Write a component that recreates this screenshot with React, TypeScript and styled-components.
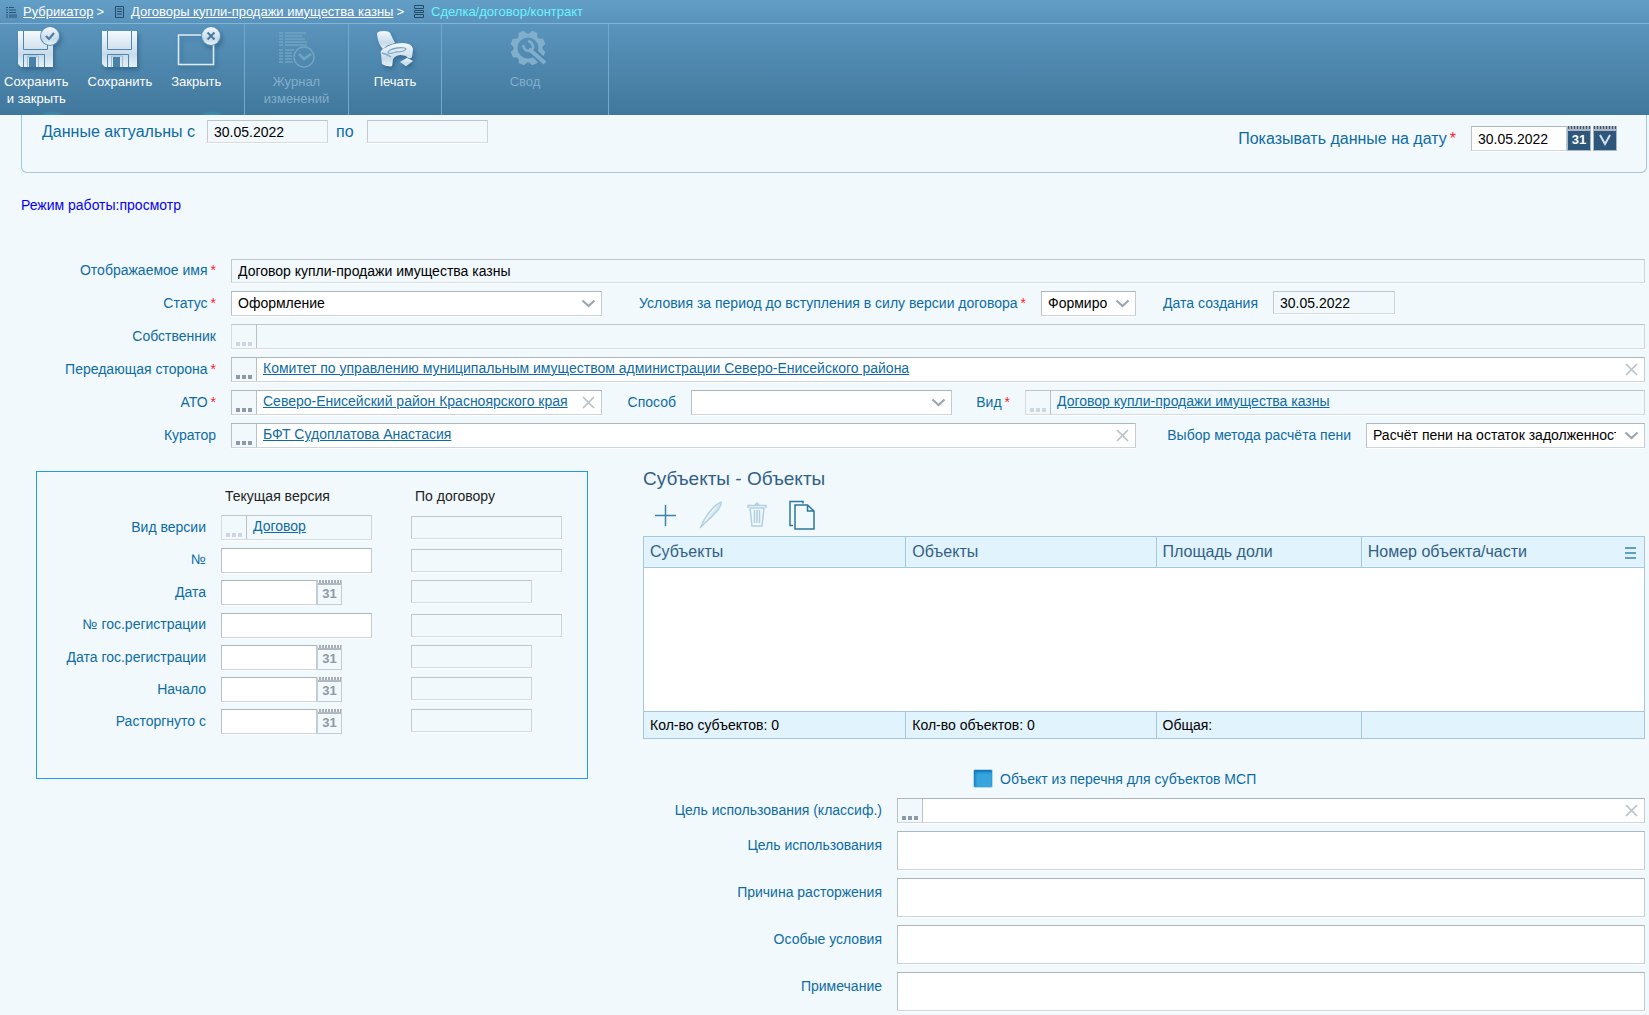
import React from 'react';
import styled, { createGlobalStyle, css } from 'styled-components';

const color = {
  page: '#f1f9fd',
  label: '#0e6ba3',
  heading: '#335f86',
  grid: '#a3c8de',
  gridHead: '#e1f3fc',
  icon: '#8f9aa9',
};

const GlobalStyle = createGlobalStyle`
  *, *::before, *::after { box-sizing: border-box; }
  body {
    margin: 0;
    background: ${color.page};
    color: #000;
    font: 14px/16px "Liberation Sans", Arial, sans-serif;
  }
  button, input, select, textarea { font: inherit; color: inherit; margin: 0; border-radius: 0; }
  button { padding: 0; border: 0; background: none; cursor: pointer; }
  button:disabled { cursor: default; }
  svg { display: block; flex: none; }
`;

/* ---------- header ---------- */

const Header = styled.header`
  background:
    radial-gradient(14px 4px at 52px 100%, #3794b8, transparent),
    radial-gradient(14px 4px at 212px 100%, #3794b8, transparent),
    linear-gradient(#629ec6 0, #5a94bc 22px, #5a94bc 24px, #40779c 100%);
  color: #fff;
  font-size: 13px;
`;

const Breadcrumbs = styled.nav`
  display: flex;
  align-items: center;
  height: 24px;
  padding: 0 6px;
  gap: 10px;
  border-bottom: 1px solid #7db6d6;
  a { color: #fff; }
`;

const Crumb = styled.span<{ $current?: boolean }>`
  display: flex;
  align-items: center;
  gap: 6px;
  color: ${(p) => (p.$current ? '#6cf3ff' : '#fff')};
`;

const Arrow = styled.span`
  margin-left: -7px;
`;

const Toolbar = styled.div`
  display: flex;
  height: 91px;
`;

const ToolGroup = styled.div<{ $width: number }>`
  display: flex;
  align-items: flex-start;
  justify-content: center;
  gap: 19px;
  width: ${(p) => p.$width}px;
  border-right: 1px solid #6fabcc;
  &:first-child { justify-content: flex-start; padding-left: 4px; }
`;

const ToolButton = styled.button`
  display: flex;
  flex-direction: column;
  align-items: center;
  gap: 1px;
  line-height: 17px;
  text-align: center;
  white-space: pre-line;
  &:disabled { color: #83afca; }
`;

/* ---------- form controls ---------- */

const edge = css`
  border: 1px solid;
  border-color: #abb6bd #c3ccd2 #ccd5db #b7c1c7;
  box-shadow: 0 1px 0 #fff;
`;

const Label = styled.label<{ $width?: number; $large?: boolean }>`
  flex: none;
  width: ${(p) => (p.$width ? `${p.$width}px` : 'auto')};
  padding: 0 15px 2px 0;
  color: ${color.label};
  font-size: ${(p) => (p.$large ? 16 : 14)}px;
  line-height: ${(p) => (p.$large ? 20 : 16)}px;
  text-align: right;
  white-space: nowrap;
`;

const Star = styled.span`
  padding-left: 3px;
  color: #f22;
`;

const TextInput = styled.input<{ $width?: number }>`
  ${edge}
  flex: ${(p) => (p.$width ? 'none' : '1')};
  width: ${(p) => (p.$width ? `${p.$width}px` : 'auto')};
  min-width: 0;
  height: 25px;
  padding: 0 6px;
  background: #fff;
  outline: none;
  &:disabled {
    height: 23px;
    background: transparent;
    border-color: #bcc6cb #cdd5da #d5dce0 #c3cbd0;
    color: #000;
  }
`;

const WideInput = styled(TextInput)`
  &:disabled { height: 24px; }
`;

const SelectBox = styled.span<{ $width: number }>`
  ${edge}
  position: relative;
  display: flex;
  flex: none;
  width: ${(p) => p.$width}px;
  height: 25px;
  background: #fff;
  select {
    appearance: none;
    width: 100%;
    border: 0;
    padding: 0 28px 2px 6px;
    background: none;
    outline: none;
    text-overflow: clip;
  }
  svg { position: absolute; right: 5px; top: 7px; pointer-events: none; }
`;

const PickerBox = styled.div<{ $width?: number; $off?: boolean }>`
  ${edge}
  display: flex;
  flex: ${(p) => (p.$width ? 'none' : '1')};
  width: ${(p) => (p.$width ? `${p.$width}px` : 'auto')};
  min-width: 0;
  height: 25px;
  background: ${(p) => (p.$off ? 'transparent' : '#fff')};
  ${(p) => p.$off && 'border-color: #bcc6cb #cdd5da #d5dce0 #d5dce0;'}
`;

const PickerButton = styled.button`
  flex: none;
  width: 25px;
  background: ${color.page};
  border-right: 1px solid #b7c1c7;
  &:disabled svg { opacity: 0.35; }
`;

const PickerValue = styled.span`
  flex: 1;
  min-width: 0;
  padding: 2px 0 0 6px;
  overflow: hidden;
  white-space: nowrap;
  a { color: ${color.label}; }
`;

const ClearButton = styled.button`
  flex: none;
  display: grid;
  place-items: center;
  width: 25px;
`;

const Dated = styled.span`
  display: flex;
`;

const CalendarButton = styled.button<{ $dark?: boolean }>`
  width: ${(p) => (p.$dark ? 24 : 25)}px;
  height: 25px;
  padding-top: 4px;
  border: 1px solid ${(p) => (p.$dark ? '#a9b8c6' : '#c3ccd2')};
  border-width: 0 1px 1px;
  background:
    repeating-linear-gradient(90deg, transparent 0 1px, #a5adb8 1px 3px) top / 100% 3px no-repeat,
    linear-gradient(#b1b8c1, #b1b8c1) 0 3px / 100% 2px no-repeat,
    ${(p) => (p.$dark ? '#2f567b' : color.page)};
  color: ${(p) => (p.$dark ? '#fff' : color.icon)};
  font-size: 13px;
  font-weight: 700;
  & + & { margin-left: 2px; }
  svg { margin: 0 auto; }
`;

/* ---------- page areas ---------- */

const Page = styled.main`
  padding: 0 4px 4px 0;
`;

const ActualBox = styled.section`
  display: flex;
  align-items: flex-start;
  justify-content: space-between;
  height: 58px;
  margin: 0 -2px 0 21px;
  padding: 5px 29px 0 20px;
  border: 1px solid ${color.grid};
  border-top: 0;
  border-radius: 0 0 6px 6px;
`;

const Inline = styled.div<{ $low?: boolean }>`
  display: flex;
  align-items: center;
  padding-top: ${(p) => (p.$low ? 6 : 0)}px;
  ${Label} { padding-bottom: 0; }
`;

const Between = styled(Label)`
  padding-left: 8px;
  text-align: left;
`;

const Mode = styled.p`
  margin: 24px 0 46px 21px;
  color: #0a00f0;
`;

const Rows = styled.div`
  display: flex;
  flex-direction: column;
  gap: 8px;
`;

const Row = styled.div<{ $top?: boolean }>`
  display: flex;
  align-items: ${(p) => (p.$top ? 'flex-start' : 'center')};
  & > ${TextInput} { align-self: flex-start; }
`;

const Columns = styled.div`
  display: flex;
  align-items: flex-start;
  margin-top: 23px;
`;

const VersionPanel = styled.section`
  flex: none;
  width: 552px;
  height: 308px;
  margin: 0 55px 0 36px;
  padding-top: 16px;
  border: 1px solid #1d9bf5;
`;

const VersionRow = styled.div<{ $text?: boolean }>`
  display: grid;
  grid-template-columns: 184px 190px 1fr;
  align-items: ${(p) => (p.$text ? 'center' : 'start')};
  height: ${(p) => (p.$text ? 26 : 25)}px;
  margin-bottom: 7px;
  ${Label} { align-self: center; }
`;

const VersionHead = styled(VersionRow)`
  height: 20px;
  margin-bottom: 7px;
  color: #222;
  span { padding-left: 4px; }
`;

const KindRow = styled(VersionRow)`
  height: 25px;
`;

const Right = styled.section`
  flex: 1;
  min-width: 0;
`;

const Heading = styled.h2`
  margin: 0;
  color: ${color.heading};
  font-size: 19px;
  font-weight: 400;
  line-height: 16px;
`;

const GridTools = styled.div`
  display: flex;
  align-items: center;
  gap: 16px;
  height: 49px;
  padding: 6px 0 0 7px;
  button { width: 30px; height: 32px; }
`;

const Table = styled.table`
  width: 100%;
  table-layout: fixed;
  border-collapse: collapse;
  border: 1px solid ${color.grid};
  background: #fff;
  th, tfoot td {
    border: 1px solid ${color.grid};
    background: ${color.gridHead};
    text-align: left;
    white-space: nowrap;
    padding: 0 6px;
  }
  th { height: 31px; color: ${color.heading}; font-size: 16px; font-weight: 400; }
  tbody td { height: 144px; padding: 0; }
  tfoot td { height: 27px; }
`;

const LastHead = styled.span`
  display: flex;
  align-items: center;
  justify-content: space-between;
`;

const CheckRow = styled.div`
  display: flex;
  align-items: center;
  gap: 7px;
  margin: 30px 0 10px 330px;
  color: ${color.label};
  input {
    appearance: none;
    width: 20px;
    height: 19px;
    border: 1px solid #b5d8ec;
    border-radius: 2px;
    background: #37a5dc;
    box-shadow: inset 1px 2px 3px #0b72b8;
  }
`;

const Area = styled.textarea`
  ${edge}
  flex: 1;
  height: 39px;
  padding: 4px 6px;
  background: #fff;
  resize: none;
  outline: none;
`;

const AreaLabel = styled(Label)`
  padding-top: 6px;
`;

/* ---------- icons ---------- */

const Dots = () => (
  <svg width="24" height="23" fill={color.icon}>
    <path d="M4 17h4v4H4zM10 17h4v4h-4zM16 17h4v4h-4z" />
  </svg>
);
const Cross = () => (
  <svg width="13" height="13" stroke="#bac2ca" strokeWidth="1.7">
    <path d="M1 1l11 11M12 1L1 12" />
  </svg>
);
const Chevron = () => (
  <svg width="15" height="10" fill="none" stroke="#9ca6b2" strokeWidth="2.2">
    <path d="M1.500 1.500l6 5.500 6-5.500" />
  </svg>
);

const Metal = () => (
  <defs>
    <linearGradient id="metal" x1="0" y1="0" x2="0" y2="1">
      <stop offset="0" stopColor="#f4f9fd" />
      <stop offset="0.65" stopColor="#c8dbea" />
      <stop offset="1" stopColor="#e6f1f8" />
    </linearGradient>
    <filter id="drop" x="-20%" y="-20%" width="150%" height="150%">
      <feDropShadow dx="2" dy="3" stdDeviation="2" floodColor="#1d5076" floodOpacity="0.5" />
    </filter>
  </defs>
);

const Floppy = () => (
  <g>
    <path fill="url(#metal)" d="M6 7h35v36H9l-3-3z" />
    <path d="M11.500 7v18.500h24V7M11.500 43V30.500h21V43" fill="none" stroke="#4d86ad" />
    <path d="M17 33h7v10h-7z" fill="#4a82a9" />
    <path d="M15.500 43V32h11v11" fill="none" stroke="#9dbdd4" />
  </g>
);

const SaveIcon = ({ badge }: { badge?: boolean }) => (
  <svg width="48" height="48" overflow="visible">
    <Metal />
    <g filter="url(#drop)">
      <Floppy />
      {badge && (
        <>
          <circle cx="38" cy="12" r="10" fill="#5791b8" />
          <circle cx="38" cy="12" r="9" fill="url(#metal)" />
          <path d="M34 12l3 3 5-6" fill="none" stroke="#48799f" strokeWidth="2" />
        </>
      )}
    </g>
  </svg>
);

const CloseIcon = () => (
  <svg width="48" height="48" overflow="visible">
    <g filter="url(#drop)">
      <path d="M6.500 11h35v29.500h-35z" fill="none" stroke="#dcebf5" strokeWidth="1.500" />
      <circle cx="39" cy="12" r="10" fill="#5791b8" />
      <circle cx="39" cy="12" r="9" fill="url(#metal)" />
      <path d="M35.500 8.500l7 7M42.500 8.500l-7 7" stroke="#48799f" strokeWidth="2" />
    </g>
  </svg>
);

const JournalIcon = () => (
  <svg width="48" height="48" fill="none" stroke="#72a4c4" strokeWidth="1.500">
    <path d="M7 9h4M7 12h4M7 15h4M7 18h4M7 21h4M7 26h4M7 29h4M7 32h4M7 35h4M7 38h4" />
    <path d="M13 9h21M13 12h17M13 15h20M13 18h22M13 21h22M13 26h9M13 29h7M13 32h7M13 35h7M13 38h8" />
    <circle cx="32" cy="33" r="10" />
    <path d="M27 30l5 5 7-5" strokeWidth="2.500" />
  </svg>
);

const PrinterIcon = () => (
  <svg width="48" height="48" overflow="visible">
    <g filter="url(#drop)" fill="url(#metal)">
      <path d="M6 10Q6 7 13 7q5 0 6 2l5 10q-9 2-12 6Q7 20 6 10z" />
      <path d="M10 30q-1-3 2-5 9-6 19-6 10 0 11 6l-1 8q-3 3-6-1-9-3-13 3l-1 7q-5 1-10-2z" />
      <path d="M29 38l7-4 6 3-7 5z" />
      <path d="M17 29q-1-3 9-5 8-1 9 1-2 3-10 3-5 2-8 1zM11 29q5 1 9 4" fill="none" stroke="#7ea8c4" strokeWidth="1.300" />
    </g>
  </svg>
);

const GearIcon = () => {
  const teeth = Array.from({ length: 8 }, (_, i) => i * 45 + 22);
  return (
    <svg width="48" height="48" fill="none" stroke="#80aecb">
      <g transform="translate(27 24)">
        {teeth.map((a) => (
          <path key={a} d="M-3-17.500h6L5-12H-5z" transform={`rotate(${a})`} fill="#80aecb" stroke="none" />
        ))}
        <circle r="12.500" strokeWidth="4" />
      </g>
      <path d="M31 27l13 12" stroke="#4e87ae" strokeWidth="8" />
      <path d="M28 25l16 14" strokeWidth="4" />
      <path d="M22 21q1 6 7 6 4-2 3-5-1-4-5-5" strokeWidth="2.500" />
    </svg>
  );
};

const ListIcon = () => (
  <svg width="11" height="12" stroke="#2b5572" strokeWidth="1.200">
    <path d="M0 1.500h2M0 4h2M0 6.500h2M0 9h2M0 11h2" />
    <path d="M3 1.500h5M3 4h7M3 6.500h7M3 9h8M3 11h8" />
  </svg>
);
const BookIcon = () => (
  <svg width="11" height="12" fill="none" stroke="#244c69">
    <path d="M1.500.5h8v11h-8zM3 3h5M3 5.500h5M3 8h5" />
  </svg>
);
const RecordIcon = () => (
  <svg width="11" height="13" fill="none" stroke="#244c69">
    <path d="M.5.5h9v3h-9zM.5 5.500h9v2h-9zM.5 9.500h9v3h-9z" />
  </svg>
);

/* ---------- composed controls ---------- */

type PickerProps = { id: string; value?: string; width?: number; disabled?: boolean };

const Picker = ({ id, value, width, disabled }: PickerProps) => (
  <PickerBox $width={width} $off={disabled}>
    <PickerButton id={id} type="button" disabled={disabled} title="Выбрать"><Dots /></PickerButton>
    <PickerValue>{value && <a href="#">{value}</a>}</PickerValue>
    {!disabled && <ClearButton type="button" title="Очистить"><Cross /></ClearButton>}
  </PickerBox>
);

const Select = ({ id, value, width }: { id: string; value: string; width: number }) => (
  <SelectBox $width={width}>
    <select id={id} defaultValue={value}><option>{value}</option></select>
    <Chevron />
  </SelectBox>
);

const versionRows = [
  { id: 'v-num', label: '№', date: false },
  { id: 'v-date', label: 'Дата', date: true },
  { id: 'v-reg', label: '№ гос.регистрации', date: false },
  { id: 'v-regdate', label: 'Дата гос.регистрации', date: true },
  { id: 'v-start', label: 'Начало', date: true },
  { id: 'v-end', label: 'Расторгнуто с', date: true },
];

const areas = ['Цель использования', 'Причина расторжения', 'Особые условия', 'Примечание'];

export default function App() {
  return (
    <>
      <GlobalStyle />
      <Header>
        <Breadcrumbs>
          <Crumb><ListIcon /><a href="#">Рубрикатор</a></Crumb>
          <Arrow>&gt;</Arrow>
          <Crumb><BookIcon /><a href="#">Договоры купли-продажи имущества казны</a></Crumb>
          <Arrow>&gt;</Arrow>
          <Crumb $current><RecordIcon />Сделка/договор/контракт</Crumb>
        </Breadcrumbs>
        <Toolbar>
          <ToolGroup $width={245}>
            <ToolButton><SaveIcon badge />{'Сохранить\nи закрыть'}</ToolButton>
            <ToolButton><SaveIcon />Сохранить</ToolButton>
            <ToolButton><CloseIcon />Закрыть</ToolButton>
          </ToolGroup>
          <ToolGroup $width={104}>
            <ToolButton disabled><JournalIcon />{'Журнал\nизменений'}</ToolButton>
          </ToolGroup>
          <ToolGroup $width={93}>
            <ToolButton><PrinterIcon />Печать</ToolButton>
          </ToolGroup>
          <ToolGroup $width={167}>
            <ToolButton disabled><GearIcon />Свод</ToolButton>
          </ToolGroup>
        </Toolbar>
      </Header>

      <Page>
        <ActualBox>
          <Inline>
            <Label htmlFor="from" $width={165} $large>Данные актуальны с</Label>
            <TextInput id="from" $width={121} defaultValue="30.05.2022" disabled />
            <Between htmlFor="to" $width={39} $large>по</Between>
            <TextInput id="to" $width={121} disabled />
          </Inline>
          <Inline $low>
            <Label htmlFor="on" $large>Показывать данные на дату<Star>*</Star></Label>
            <TextInput id="on" $width={96} defaultValue="30.05.2022" />
            <CalendarButton $dark>31</CalendarButton>
            <CalendarButton $dark title="Применить">
              <svg width="14" height="12" fill="none" stroke="#d5e2ee" strokeWidth="2"><path d="M2 1l5 9 5-9" /></svg>
            </CalendarButton>
          </Inline>
        </ActualBox>

        <Mode>Режим работы:просмотр</Mode>

        <Rows>
          <Row>
            <Label htmlFor="name" $width={231}>Отображаемое имя<Star>*</Star></Label>
            <WideInput id="name" defaultValue="Договор купли-продажи имущества казны" disabled />
          </Row>
          <Row>
            <Label htmlFor="status" $width={231}>Статус<Star>*</Star></Label>
            <Select id="status" width={371} value="Оформление" />
            <Label htmlFor="terms" $width={439}>Условия за период до вступления в силу версии договора<Star>*</Star></Label>
            <Select id="terms" width={95} value="Формировать" />
            <Label htmlFor="created" $width={137}>Дата создания</Label>
            <TextInput id="created" $width={122} defaultValue="30.05.2022" disabled />
          </Row>
          <Row>
            <Label htmlFor="owner" $width={231}>Собственник</Label>
            <Picker id="owner" disabled />
          </Row>
          <Row>
            <Label htmlFor="side" $width={231}>Передающая сторона<Star>*</Star></Label>
            <Picker id="side" value="Комитет по управлению муниципальным имуществом администрации Северо-Енисейского района" />
          </Row>
          <Row>
            <Label htmlFor="ato" $width={231}>АТО<Star>*</Star></Label>
            <Picker id="ato" width={371} value="Северо-Енисейский район Красноярского края" />
            <Label htmlFor="way" $width={89}>Способ</Label>
            <Select id="way" width={261} value="" />
            <Label htmlFor="kind" $width={73}>Вид<Star>*</Star></Label>
            <Picker id="kind" disabled value="Договор купли-продажи имущества казны" />
          </Row>
          <Row>
            <Label htmlFor="curator" $width={231}>Куратор</Label>
            <Picker id="curator" value="БФТ Судоплатова Анастасия" />
            <Label htmlFor="penalty" $width={230}>Выбор метода расчёта пени</Label>
            <Select id="penalty" width={279} value="Расчёт пени на остаток задолженности" />
          </Row>
        </Rows>

        <Columns>
          <VersionPanel>
            <VersionHead><i /><span>Текущая версия</span><span>По договору</span></VersionHead>
            <KindRow $text>
              <Label htmlFor="v-kind">Вид версии</Label>
              <Picker id="v-kind" width={151} value="Договор" disabled />
              <TextInput aria-label="Вид версии по договору" $width={151} disabled />
            </KindRow>
            {versionRows.map((r) => (
              <VersionRow key={r.id} $text={!r.date}>
                <Label htmlFor={r.id}>{r.label}</Label>
                <Dated>
                  <TextInput id={r.id} $width={r.date ? 96 : 151} />
                  {r.date && <CalendarButton>31</CalendarButton>}
                </Dated>
                <TextInput aria-label={`${r.label} по договору`} $width={r.date ? 121 : 151} disabled />
              </VersionRow>
            ))}
          </VersionPanel>

          <Right>
            <Heading>Субъекты - Объекты</Heading>
            <GridTools>
              <button title="Добавить">
                <svg width="30" height="32" stroke="#3d84ad" strokeWidth="1.500"><path d="M5 16.500h21M15.500 6v21" /></svg>
              </button>
              <button title="Изменить" disabled>
                <svg width="30" height="32" fill="#d3e7f1" stroke="#b0cfe0" strokeWidth="1.200">
                  <path d="M4 29l4-8Q16 7 25 3q1 3-4 9T9 24z" />
                  <path d="M9 22L20 8" stroke="#f1f9fd" />
                </svg>
              </button>
              <button title="Удалить" disabled>
                <svg width="30" height="32" fill="none" stroke="#b0cfe0" strokeWidth="1.500">
                  <path d="M6 9V6.500h18V9M13 6l2-2 2 2M8 9l2 18h10l2-18zM12.500 11v13M15 11v13M17.500 11v13" />
                </svg>
              </button>
              <button title="Копировать">
                <svg width="30" height="32" fill="none" stroke="#2b779f" strokeWidth="1.500">
                  <path d="M5 26.500H2V2.500h13v2" />
                  <path d="M7 6h12.500l6.500 6v18H7zM19.500 6v6H26" />
                </svg>
              </button>
            </GridTools>
            <Table>
              <colgroup>
                <col style={{ width: '26.2%' }} />
                <col style={{ width: '25%' }} />
                <col style={{ width: '20.5%' }} />
                <col />
              </colgroup>
              <thead>
                <tr>
                  <th>Субъекты</th>
                  <th>Объекты</th>
                  <th>Площадь доли</th>
                  <th>
                    <LastHead>
                      Номер объекта/части
                      <svg width="13" height="13" stroke="#62a0c2" strokeWidth="2"><path d="M0 2h11M0 7h11M0 12h11" /></svg>
                    </LastHead>
                  </th>
                </tr>
              </thead>
              <tbody><tr><td colSpan={4} /></tr></tbody>
              <tfoot>
                <tr>
                  <td>Кол-во субъектов: 0</td>
                  <td>Кол-во объектов: 0</td>
                  <td>Общая:</td>
                  <td />
                </tr>
              </tfoot>
            </Table>

            <CheckRow>
              <input type="checkbox" id="msp" />
              <label htmlFor="msp">Объект из перечня для субъектов МСП</label>
            </CheckRow>

            <Rows>
              <Row>
                <Label htmlFor="purpose" $width={254}>Цель использования (классиф.)</Label>
                <Picker id="purpose" />
              </Row>
              {areas.map((name, i) => (
                <Row key={name} $top>
                  <AreaLabel htmlFor={`area-${i}`} $width={254}>{name}</AreaLabel>
                  <Area id={`area-${i}`} />
                </Row>
              ))}
            </Rows>
          </Right>
        </Columns>
      </Page>
    </>
  );
}
